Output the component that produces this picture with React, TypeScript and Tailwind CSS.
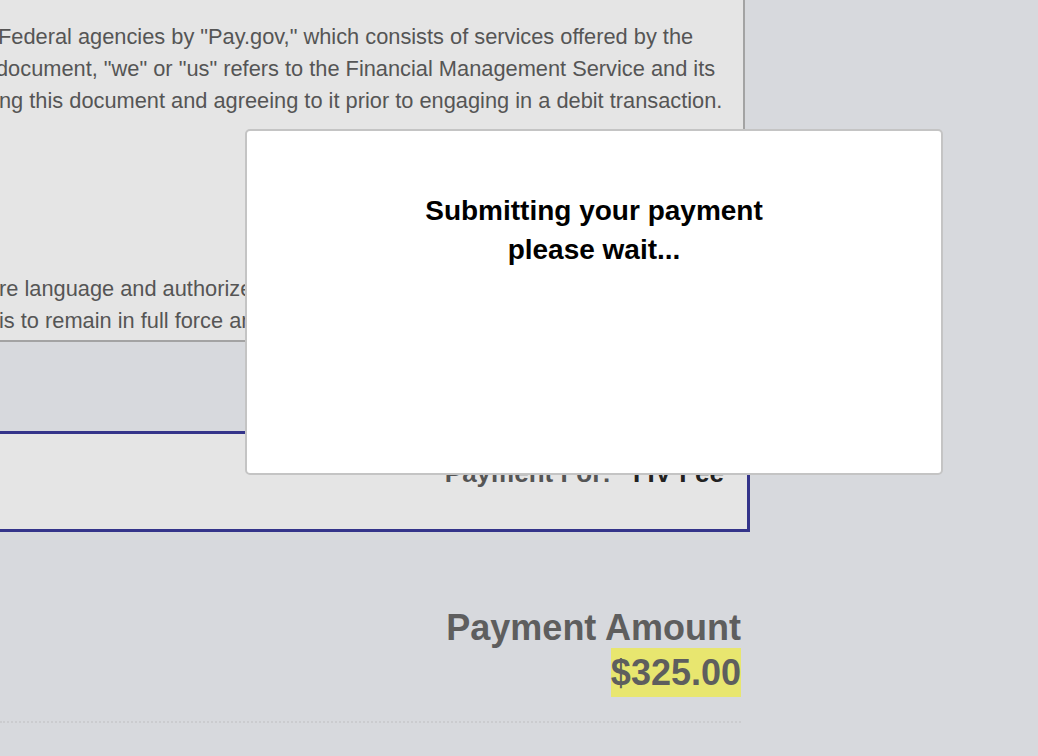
const App = () => {
    return (
        <div className="relative w-[1038px] h-[756px] overflow-hidden bg-[#d7d9dd] font-['Liberation_Sans',Arial,sans-serif]">
            {/* PAGE */}
            <div className="w-[750px]">
                {/* TERMS */}
                <div className="w-[745px] h-[342px] bg-[#e5e5e5] border-r-2 border-b-2 border-[#a3a3a3] overflow-hidden text-[21.8px] leading-[32px] text-[#555555] pt-[21px]">
                    <div className="whitespace-nowrap ml-[-2px]">Federal agencies by "Pay.gov," which consists of services offered by the</div>
                    <div className="whitespace-nowrap ml-[-4px]">document, "we" or "us" refers to the Financial Management Service and its</div>
                    <div className="whitespace-nowrap ml-[-1px]">ng this document and agreeing to it prior to engaging in a debit transaction.</div>
                    <div className="mt-[156px]">
                        <div className="whitespace-nowrap ml-[-1px]">re language and authorize the debit. This authorization</div>
                        <div className="whitespace-nowrap ml-[-1px]">is to remain in full force and effect until you notify us.</div>
                    </div>
                </div>

                {/* PAYMENT FOR */}
                <div className="mt-[89px] h-[101px] bg-[#e5e5e5] border-t-[3px] border-r-[3px] border-b-[3px] border-[#34348a] flex justify-end pr-[23px] pt-[24px]">
                    <div className="text-[26px] leading-[30px] font-bold whitespace-nowrap">
                        <span className="text-[#555555]">Payment For:</span>
                        <span className="text-[#222222] ml-[22px]">I IV Fee</span>
                    </div>
                </div>

                {/* AMOUNT */}
                <div className="w-[741px] mt-[76px] flex flex-col items-end text-[#5e5e5e] font-bold">
                    <div className="text-[36px] leading-[40px]">Payment Amount</div>
                    <div className="text-[36px] leading-[49px] bg-[#e8e66f]">$325.00</div>
                </div>
                <div className="w-[741px] mt-[24px] border-b-2 border-dotted border-[#cbcccf]"></div>
            </div>

            {/* MODAL */}
            <div className="absolute left-[245px] top-[129px] w-[698px] h-[346px] bg-white border-2 border-[#c4c4c4] rounded-[5px] pt-[60px] text-center text-black font-bold text-[28px] leading-[39px]">
                <div>Submitting your payment</div>
                <div>please wait...</div>
            </div>
        </div>
    )
}
export default App
